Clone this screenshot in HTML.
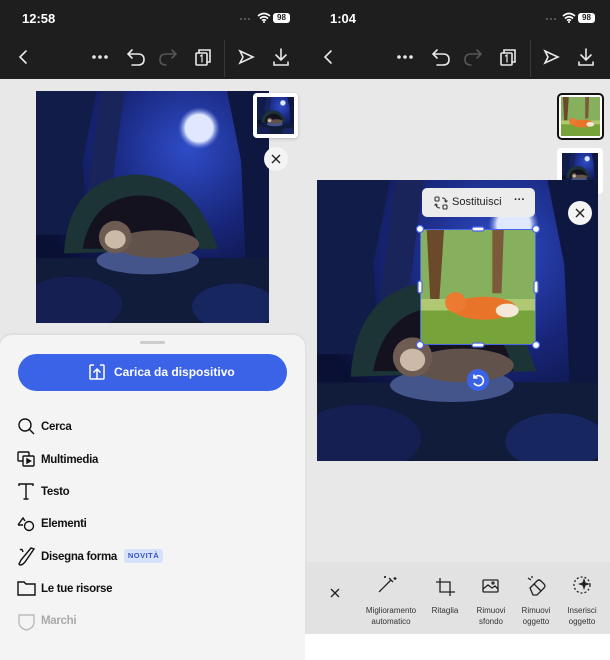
<!DOCTYPE html>
<html><head><meta charset="utf-8">
<style>
*{margin:0;padding:0;box-sizing:border-box}
body{width:610px;height:660px;overflow:hidden;font-family:"Liberation Sans",sans-serif;background:#e8e8e8;position:relative}
.abs{position:absolute}
.dark{background:#1e1e1e;top:0;height:79px;width:305px}
.time{color:#fff;font-weight:bold;font-size:13px;top:11px}
.bat{top:13px;width:17px;height:10px;background:#fff;border-radius:3px;font-size:8px;font-weight:bold;color:#1e1e1e;text-align:center;line-height:10px}
.menu{left:18px;font-size:11.5px;font-weight:bold;color:#111;letter-spacing:-0.3px}
.menu span{position:absolute;left:23px;top:0;white-space:nowrap}
.tl{font-size:8px;color:#333;text-align:center;line-height:11px;width:60px}
</style></head><body>
<svg width="0" height="0" style="position:absolute"><defs>
<radialGradient id="sky" cx="0.65" cy="0.25" r="0.7"><stop offset="0" stop-color="#2f4cc8"/><stop offset="0.5" stop-color="#18267a"/><stop offset="1" stop-color="#0a1034"/></radialGradient>
<radialGradient id="moon" cx="0.5" cy="0.5" r="0.5"><stop offset="0.65" stop-color="#dfe8ff"/><stop offset="1" stop-color="#7a92e8" stop-opacity="0"/></radialGradient>
<symbol id="scene" viewBox="0 0 100 100" preserveAspectRatio="none">
<rect width="100" height="100" fill="url(#sky)"/>
<circle cx="70" cy="16" r="9" fill="url(#moon)"/>
<path d="M0 0H26L20 30 22 62H0Z" fill="#121c48"/>
<path d="M28 0H38L32 45H22Z" fill="#18245a"/>
<path d="M82 0H100V75H90L88 30Z" fill="#0e1740"/>
<path d="M12 70Q14 38 42 36Q68 36 78 68Z" fill="#1c3436"/>
<path d="M20 68Q24 46 44 45Q64 45 70 68Z" fill="#151220"/>
<rect x="0" y="72" width="100" height="28" fill="#111b3a"/>
<ellipse cx="48" cy="73" rx="22" ry="6" fill="#44558c"/>
<ellipse cx="52" cy="66" rx="18" ry="6" fill="#62524c"/>
<circle cx="34" cy="63" r="7" fill="#6e5c52"/>
<ellipse cx="34" cy="64" rx="4.5" ry="4" fill="#cbbaa8"/>
<ellipse cx="15" cy="92" rx="22" ry="12" fill="#151f52"/>
<ellipse cx="85" cy="93" rx="18" ry="10" fill="#182660"/>
</symbol>
<symbol id="fox" viewBox="0 0 100 100" preserveAspectRatio="none">
<rect width="100" height="100" fill="#b0c872"/>
<rect width="100" height="60" fill="#86b05e"/>
<path d="M5 0H20L16 60H8Z" fill="#6a4a2a"/>
<path d="M62 0H72L70 55H62Z" fill="#7a5a3a"/>
<rect y="70" width="100" height="30" fill="#76a43a"/>
<ellipse cx="55" cy="68" rx="28" ry="10" fill="#e8742a"/>
<circle cx="30" cy="63" r="9" fill="#ec7a30"/>
<ellipse cx="75" cy="70" rx="10" ry="6" fill="#f4e8d8"/>
</symbol>
</defs></svg>

<div class="abs dark" style="left:0"></div>
<div class="abs time" style="left:22px">12:58</div>
<div class="abs" style="left:240px;top:18px;width:10px;border-top:2px dotted #555"></div>
<svg class="abs" style="left:257px;top:12px" width="14" height="11" viewBox="0 0 14 11"><path d="M1 4Q7-1 13 4M3 6.5Q7 3 11 6.5M5 8.5Q7 7 9 8.5" stroke="#fff" stroke-width="1.6" fill="none"/><circle cx="7" cy="10" r="1" fill="#fff"/></svg>
<div class="abs bat" style="left:273px">98</div>
<div class="abs" style="left:224px;top:40px;width:1px;height:37px;background:#3a3a3a"></div>

<div class="abs" style="left:305px;top:0;width:305px;height:79px;background:#1e1e1e"></div>
<div class="abs time" style="left:330px">1:04</div>
<div class="abs" style="left:546px;top:18px;width:10px;border-top:2px dotted #555"></div>
<svg class="abs" style="left:562px;top:12px" width="14" height="11" viewBox="0 0 14 11"><path d="M1 4Q7-1 13 4M3 6.5Q7 3 11 6.5M5 8.5Q7 7 9 8.5" stroke="#fff" stroke-width="1.6" fill="none"/><circle cx="7" cy="10" r="1" fill="#fff"/></svg>
<div class="abs bat" style="left:578px">98</div>
<div class="abs" style="left:530px;top:40px;width:1px;height:37px;background:#3a3a3a"></div>

<svg class="abs" style="left:0;top:40px" width="610" height="38" viewBox="0 0 610 38">
<g id="tb" stroke="#e8e8e8" stroke-width="1.6" fill="none" stroke-linecap="round">
<path d="M26 11L20 17 26 23"/>
<circle cx="94" cy="17" r="1" fill="#e8e8e8"/><circle cx="100" cy="17" r="1" fill="#e8e8e8"/><circle cx="106" cy="17" r="1" fill="#e8e8e8"/>
<path d="M132 10L128 14 132 18M128 14H138Q144 14 144 19.5Q144 25 138 25H132"/>
<path d="M172 10L176 14 172 18M176 14H166Q160 14 160 19.5Q160 25 166 25" stroke="#555"/>
<rect x="196" y="13" width="11" height="12" rx="1"/><path d="M199 13V10H210V22H207"/>
<path d="M200.5 16L202 15V22" stroke-width="1.2"/>
<path d="M240 11L253 17 240 23 243 17Z"/>
<path d="M281 9V20M276 15L281 20 286 15M274 22V25H288V22"/>
</g>
<use href="#tb" x="305"/>
</svg>

<svg class="abs" style="left:36px;top:91px" width="233" height="232"><use href="#scene" width="233" height="232"/></svg>
<div class="abs" style="left:253px;top:93px;width:45px;height:45px;background:#fff;border-radius:4px;box-shadow:0 1px 3px rgba(0,0,0,.2)"></div>
<svg class="abs" style="left:257px;top:97px" width="37" height="37"><use href="#scene" width="37" height="37"/></svg>
<div class="abs" style="left:264px;top:147px;width:24px;height:24px;border-radius:50%;background:#f4f4f4"></div>
<svg class="abs" style="left:264px;top:147px" width="24" height="24"><path d="M8 8L16 16M16 8L8 16" stroke="#222" stroke-width="1.4"/></svg>

<div class="abs" style="left:0;top:335px;width:305px;height:325px;background:#f4f4f4;border-radius:12px 12px 0 0;box-shadow:0 -1px 3px rgba(0,0,0,.08)"></div>
<div class="abs" style="left:140px;top:341px;width:25px;height:3px;border-radius:2px;background:#ccc"></div>
<div class="abs" style="left:18px;top:354px;width:269px;height:37px;border-radius:19px;background:#3b63e8;color:#fff;font-size:12px;font-weight:bold;line-height:37px;padding-left:96px">Carica da dispositivo</div>
<svg class="abs" style="left:88px;top:363px" width="18" height="18" viewBox="0 0 18 18" fill="none" stroke="#fff" stroke-width="1.5"><path d="M6 2H3Q2 2 2 3V15Q2 16 3 16H15Q16 16 16 15V3Q16 2 15 2H12"/><path d="M9 16V6M5.5 9.5L9 6 12.5 9.5"/></svg>

<svg class="abs" style="left:17px;top:418px" width="20" height="215" viewBox="0 0 20 215" fill="none" stroke="#111" stroke-width="1.4">
<circle cx="8" cy="7" r="6"/><path d="M12.5 11.5L17 16"/>
<rect x="1" y="34" width="11" height="9" rx="1"/><rect x="6" y="38" width="11" height="10" rx="1" fill="#f4f4f4"/><path d="M10 41L13.5 43 10 45Z" fill="#111"/>
<path d="M2 68V66H16V68M9 66V81M6.5 81H11.5"/>
<path d="M1 107L6 100 8 103M1 107H6"/><circle cx="12" cy="108" r="4.5"/>
<path d="M17 131L8 144 6 146Q3 148 2 146L4 142 14 130Z"/><path d="M3 132Q5 130 6 134"/>
<path d="M1 164H7L9 166H18V177H1Z"/>
<path d="M2 197H17V204Q17 210 9.5 212Q2 210 2 204Z" stroke="#bbb"/>
</svg>
<div class="abs menu" style="top:421px"><span>Cerca</span></div>
<div class="abs menu" style="top:454px"><span>Multimedia</span></div>
<div class="abs menu" style="top:486px"><span>Testo</span></div>
<div class="abs menu" style="top:518px"><span>Elementi</span></div>
<div class="abs menu" style="top:551px"><span>Disegna forma</span></div>
<div class="abs" style="left:124px;top:549px;width:39px;height:14px;border-radius:3px;background:#d6e2fb;color:#3454c8;font-size:7.5px;font-weight:bold;text-align:center;line-height:14px;letter-spacing:.5px">NOVITÀ</div>
<div class="abs menu" style="top:583px"><span>Le tue risorse</span></div>
<div class="abs menu" style="top:615px;color:#aaa"><span>Marchi</span></div>

<div class="abs" style="left:557px;top:93px;width:47px;height:47px;border:2px solid #111;border-radius:5px;background:#fff"></div>
<svg class="abs" style="left:561px;top:97px" width="39" height="39"><use href="#fox" width="39" height="39"/></svg>
<div class="abs" style="left:557px;top:148px;width:46px;height:46px;background:#fff;border-radius:4px"></div>
<svg class="abs" style="left:562px;top:153px" width="36" height="36"><use href="#scene" width="36" height="36"/></svg>

<svg class="abs" style="left:317px;top:180px" width="281" height="281"><use href="#scene" width="281" height="281"/></svg>
<div class="abs" style="left:422px;top:188px;width:113px;height:29px;border-radius:5px;background:#ececec"></div>
<svg class="abs" style="left:434px;top:196px" width="14" height="14" fill="none" stroke="#333" stroke-width="1.1"><rect x="1" y="1" width="4" height="4" rx="1"/><rect x="9" y="9" width="4" height="4" rx="1"/><path d="M8 2Q12 2 12 6M10.5 4.5L12 6 13.5 4.5M6 12Q2 12 2 8M0.5 9.5L2 8 3.5 9.5"/></svg>
<div class="abs" style="left:452px;top:196px;font-size:11px;color:#222">Sostituisci</div>
<div class="abs" style="left:514px;top:194px;font-size:11px;color:#222;font-weight:bold">···</div>
<div class="abs" style="left:568px;top:201px;width:24px;height:24px;border-radius:50%;background:#f4f4f4"></div>
<svg class="abs" style="left:568px;top:201px" width="24" height="24"><path d="M8 8L16 16M16 8L8 16" stroke="#222" stroke-width="1.4"/></svg>

<svg class="abs" style="left:421px;top:230px" width="115" height="115"><use href="#fox" width="115" height="115"/></svg>
<div class="abs" style="left:420px;top:229px;width:116px;height:116px;border:1.5px solid #4a66e8"></div>
<svg class="abs" style="left:414px;top:223px" width="128" height="128" fill="#fff" stroke="#4a66e8" stroke-width="1.2">
<circle cx="6" cy="6" r="3.5"/><circle cx="122" cy="6" r="3.5"/><circle cx="6" cy="122" r="3.5"/><circle cx="122" cy="122" r="3.5"/>
<rect x="58" y="4" width="12" height="4" rx="2"/><rect x="58" y="120" width="12" height="4" rx="2"/><rect x="4" y="58" width="4" height="12" rx="2"/><rect x="120" y="58" width="4" height="12" rx="2"/>
</svg>
<div class="abs" style="left:467px;top:369px;width:22px;height:22px;border-radius:50%;background:#3b63e8"></div>
<svg class="abs" style="left:467px;top:369px" width="22" height="22" fill="none" stroke="#fff" stroke-width="1.6"><path d="M7.5 8.5A5 5 0 1 1 7 14"/><path d="M7 5.5V9H10.5"/></svg>

<div class="abs" style="left:305px;top:562px;width:305px;height:72px;background:#e2e2e2"></div>
<div class="abs" style="left:305px;top:634px;width:305px;height:26px;background:#fff"></div>
<svg class="abs" style="left:305px;top:570px" width="305" height="30" fill="none" stroke="#222" stroke-width="1.3">
<path d="M26 22L34 30M34 22L26 30" transform="translate(0,-3)"/>
<path d="M74 22L86 10M84 8L88 12M90 7V10M88.5 8.5H91.5M80 6V8M79 7H81"/>
<path d="M135 8V22H150M131 12H145V26"/>
<rect x="178" y="10" width="15" height="12" rx="1"/><path d="M178 19L183 15 187 18 190 16 193 19"/><circle cx="188" cy="13" r="1"/>
<path d="M225 18L232 11Q234 9 236 11L239 14Q241 16 239 18L232 25H228Z"/><path d="M229 14L236 21M223 8L226 10M227 6V8"/>
<circle cx="277" cy="15" r="8" stroke-dasharray="2 2"/><path d="M279 10L280 13 283 14 280 15 279 18 278 15 275 14 278 13Z" fill="#222"/>
</svg>
<div class="abs tl" style="left:361px;top:605px">Miglioramento<br>automatico</div>
<div class="abs tl" style="left:415px;top:605px">Ritaglia</div>
<div class="abs tl" style="left:461px;top:605px">Rimuovi<br>sfondo</div>
<div class="abs tl" style="left:506px;top:605px">Rimuovi<br>oggetto</div>
<div class="abs tl" style="left:552px;top:605px">Inserisci<br>oggetto</div>
</body></html>
